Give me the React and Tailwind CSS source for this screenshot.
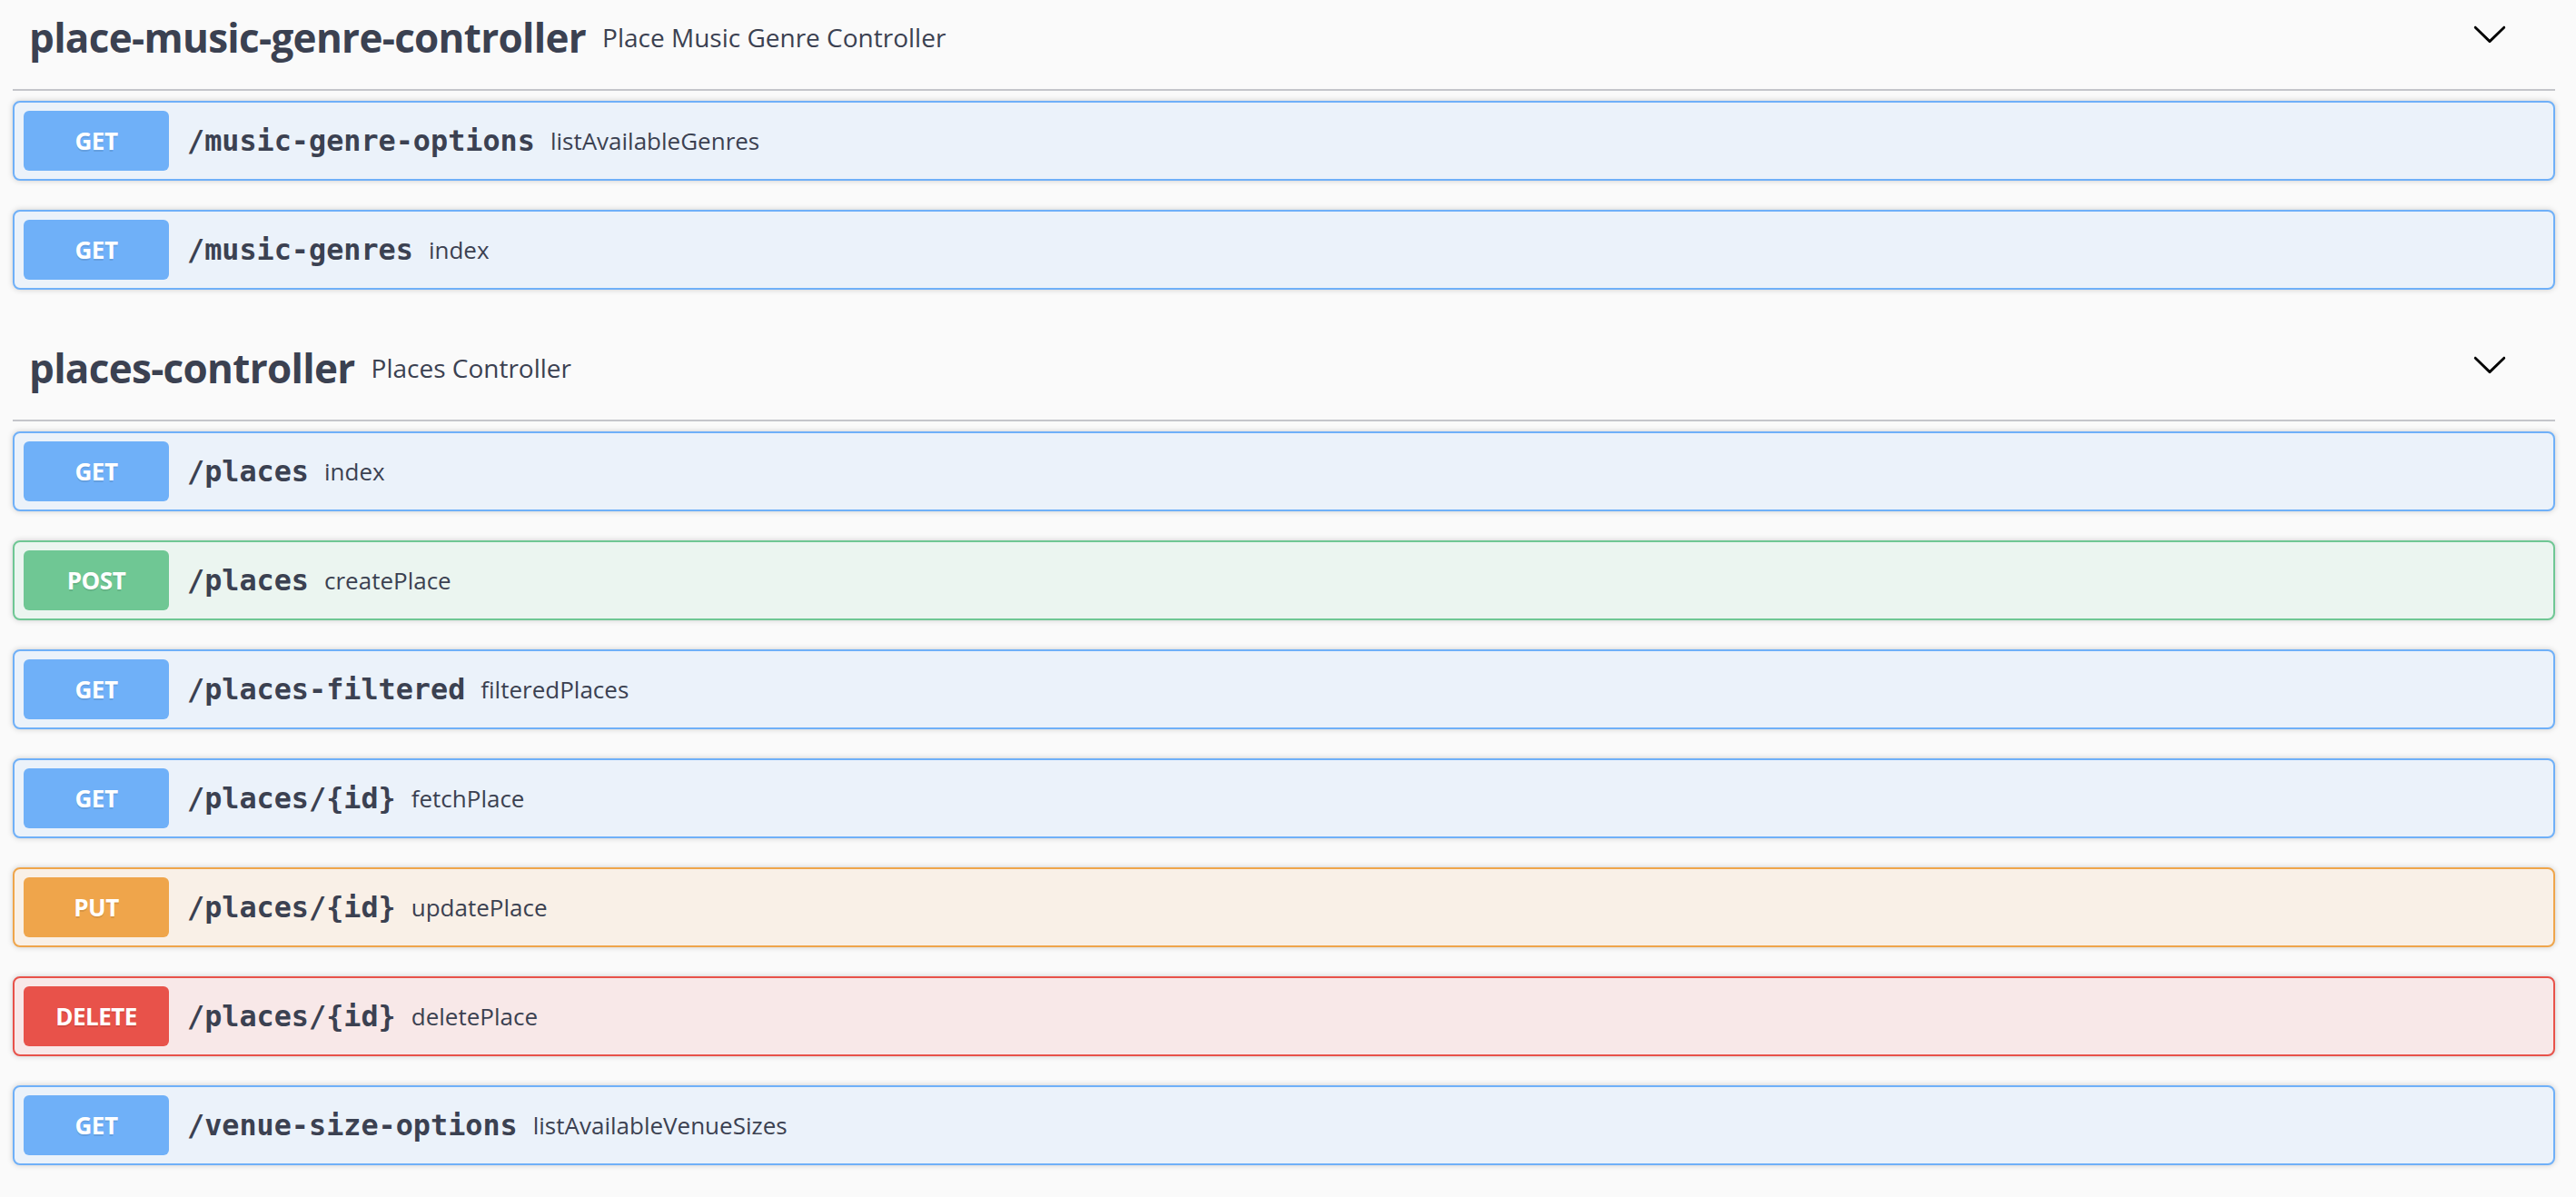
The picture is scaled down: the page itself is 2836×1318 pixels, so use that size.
const methodStyles = {
  GET: {
    block: 'border-[#6fb0f8] bg-[#ebf2fa]',
    badge: 'bg-[#6fb0f8]',
  },
  POST: {
    block: 'border-[#6fc794] bg-[#ebf5f0]',
    badge: 'bg-[#6fc794]',
  },
  PUT: {
    block: 'border-[#efa54b] bg-[#f9f0e7]',
    badge: 'bg-[#efa54b]',
  },
  DELETE: {
    block: 'border-[#e8524a] bg-[#f8e8e8]',
    badge: 'bg-[#e8524a]',
  },
};

const sections = [
  {
    name: 'place-music-genre-controller',
    description: 'Place Music Genre Controller',
    ops: [
      { method: 'GET', path: '/music-genre-options', summary: 'listAvailableGenres' },
      { method: 'GET', path: '/music-genres', summary: 'index' },
    ],
  },
  {
    name: 'places-controller',
    description: 'Places Controller',
    ops: [
      { method: 'GET', path: '/places', summary: 'index' },
      { method: 'POST', path: '/places', summary: 'createPlace' },
      { method: 'GET', path: '/places-filtered', summary: 'filteredPlaces' },
      { method: 'GET', path: '/places/{id}', summary: 'fetchPlace' },
      { method: 'PUT', path: '/places/{id}', summary: 'updatePlace' },
      { method: 'DELETE', path: '/places/{id}', summary: 'deletePlace' },
      { method: 'GET', path: '/venue-size-options', summary: 'listAvailableVenueSizes' },
    ],
  },
];

function Chevron() {
  return (
    <svg width="40" height="40" viewBox="0 0 20 20" className="mb-[12px] shrink-0">
      <path
        fill="#000"
        d="M17.418 6.109c.272-.268.709-.268.979 0s.271.701 0 .969l-7.908 7.83c-.27.268-.707.268-.979 0l-7.908-7.83c-.27-.268-.27-.701 0-.969.271-.268.709-.268.979 0L10 13.25l7.418-7.141z"
      />
    </svg>
  );
}

function TagHeader({ name, description }) {
  return (
    <div className="flex items-center h-[113px] border-b-2 border-[#c4c5ca] pl-[18px] pr-[52px] mb-[11px]">
      <div className="flex flex-1 items-center mb-[3px]">
        <h3 className="font-['Open_Sans',sans-serif] font-bold text-[44px] leading-none tracking-[-0.7px] text-[#3b4151]">
          {name}
        </h3>
        <span className="ml-[18px] font-['Open_Sans',sans-serif] text-[28px] leading-none text-[#3b4151]">
          {description}
        </span>
      </div>
      <Chevron />
    </div>
  );
}

function OpBlock({ method, path, summary }) {
  const s = methodStyles[method];
  return (
    <div
      className={`flex items-center h-[88px] mb-[32px] px-[10px] rounded-[8px] border-2 shadow-[0_0_6px_rgba(0,0,0,0.19)] ${s.block}`}
    >
      <div
        className={`flex items-center justify-center w-[160px] h-[66px] rounded-[6px] text-white font-['Open_Sans',sans-serif] font-bold text-[26px] tracking-[-0.5px] [text-shadow:0_2px_0_rgba(0,0,0,0.1)] ${s.badge}`}
      >
        {method}
      </div>
      <span className="pl-[20px] pr-[17px] font-['DejaVu_Sans_Mono',monospace] font-bold text-[31.8px] leading-none text-[#3b4151]">
        {path}
      </span>
      <span className="font-['Open_Sans',sans-serif] text-[26px] leading-none text-[#3b4151]">
        {summary}
      </span>
    </div>
  );
}

export default function App() {
  return (
    <div className="min-h-screen overflow-hidden bg-[#fafafa]">
      <div className="-mt-[13px] pl-[14px] pr-[23px]">
        {sections.map((sec) => (
          <section key={sec.name}>
            <TagHeader name={sec.name} description={sec.description} />
            {sec.ops.map((op, i) => (
              <OpBlock key={i} {...op} />
            ))}
          </section>
        ))}
      </div>
    </div>
  );
}
